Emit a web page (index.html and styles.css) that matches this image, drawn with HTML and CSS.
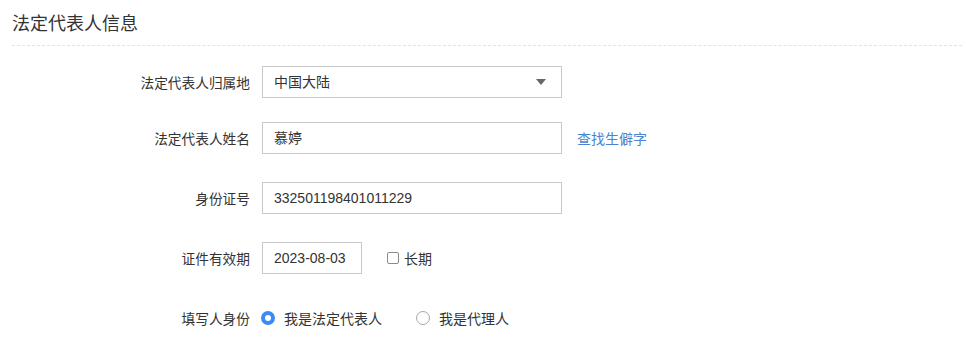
FILE: index.html
```html
<!DOCTYPE html>
<html lang="zh-CN">
<head>
    <meta charset="UTF-8">
    <title>法定代表人信息</title>
    <link rel="stylesheet" href="styles.css">
</head>
<body>

    <h1 class="section-title">法定代表人信息</h1>

    <div class="form">
        <!-- 归属地 -->
        <div class="row row-first">
            <label class="label">法定代表人归属地</label>
            <div class="select">
                <span>中国大陆</span>
                <span class="arrow"></span>
            </div>
        </div>

        <!-- 姓名 -->
        <div class="row">
            <label class="label">法定代表人姓名</label>
            <div class="field">慕婷</div>
            <a class="link" href="#">查找生僻字</a>
        </div>

        <!-- 身份证号 -->
        <div class="row">
            <label class="label">身份证号</label>
            <div class="field">332501198401011229</div>
        </div>

        <!-- 有效期 -->
        <div class="row">
            <label class="label">证件有效期</label>
            <div class="field field-date">2023-08-03</div>
            <span class="check"><span class="box"></span>长期</span>
        </div>

        <!-- 填写人身份 -->
        <div class="row">
            <label class="label">填写人身份</label>
            <span class="radio checked"><span class="dot"></span>我是法定代表人</span>
            <span class="radio"><span class="dot"></span>我是代理人</span>
        </div>
    </div>

</body>
</html>
```

FILE: styles.css
```css
body {
    margin: 0;
    padding: 0 4px 0 12px;
    font-family: "Liberation Sans", "Noto Sans CJK SC", sans-serif;
    font-size: 14px;
    color: #333;
    background-color: #fff;
}
.section-title {
    margin: 0;
    padding: 12px 0 9px;
    font-size: 18px;
    line-height: 24px;
    font-weight: normal;
    color: #333;
    border-bottom: 1px dashed #e3e3e3;
}
.form {
    padding-top: 20px;
}
.row {
    display: flex;
    align-items: center;
    height: 32px;
    margin-top: 28px;
}
.row-first {
    margin-top: 0;
    margin-bottom: -4px;
}
.label {
    width: 238px;
    margin-right: 12px;
    text-align: right;
    font-size: 13.7px;
    color: #333;
}
.select, .field {
    box-sizing: border-box;
    width: 300px;
    height: 32px;
    padding: 0 11px;
    border: 1px solid #c9c9c9;
    line-height: 30px;
    color: #333;
}
.select {
    display: flex;
    justify-content: space-between;
    align-items: center;
}
.arrow {
    width: 0;
    height: 0;
    margin-right: 4px;
    border-left: 5px solid transparent;
    border-right: 5px solid transparent;
    border-top: 6px solid #666;
}
.field-date {
    width: 100px;
}
.link {
    margin-left: 15px;
    color: #4a84cf;
    text-decoration: none;
}
.check {
    display: flex;
    align-items: center;
    margin-left: 25px;
}
.box {
    box-sizing: border-box;
    width: 12px;
    height: 12px;
    margin-right: 5px;
    border: 1px solid #8a8a8a;
    border-radius: 2px;
}
.radio {
    display: flex;
    align-items: center;
    margin-right: 35px;
}
.radio .dot {
    box-sizing: border-box;
    width: 14px;
    height: 14px;
    margin-left: -1px;
    margin-right: 9px;
    border: 1px solid #a9a9a9;
    border-radius: 50%;
}
.radio.checked .dot {
    border: 4.5px solid #3d8af5;
    background-color: #fff;
}
```
